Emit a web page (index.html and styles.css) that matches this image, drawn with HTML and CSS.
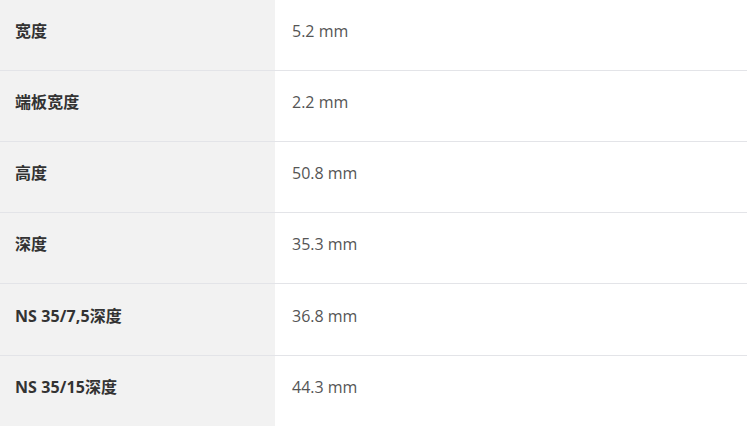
FILE: index.html
```html
<!DOCTYPE html>
<html lang="zh">
<head>
<meta charset="utf-8">
<link rel="stylesheet" href="styles.css">
</head>
<body>
<table class="spec">
  <tbody>
    <tr class="first"><th>宽度</th><td>5.2 mm</td></tr>
    <tr><th>端板宽度</th><td>2.2 mm</td></tr>
    <tr><th>高度</th><td>50.8 mm</td></tr>
    <tr><th>深度</th><td>35.3 mm</td></tr>
    <tr class="tall"><th>NS 35/7,5深度</th><td>36.8 mm</td></tr>
    <tr><th>NS 35/15深度</th><td>44.3 mm</td></tr>
  </tbody>
</table>
</body>
</html>
```
FILE: styles.css
```css
html, body {
  margin: 0;
  padding: 0;
  background: #fff;
}
body {
  font-family: "Open Sans", "Noto Sans CJK SC", sans-serif;
}
.spec {
  width: 747px;
  border-collapse: collapse;
  table-layout: fixed;
}
.spec tr {
  height: 71px;
}
.spec tr.first {
  height: 70px;
}
.spec tr.tall {
  height: 72px;
}
.spec tr + tr th,
.spec tr + tr td {
  border-top: 1px solid #e3e4e8;
}
.spec th,
.spec td {
  padding: 0 15px 7px;
  vertical-align: middle;
  line-height: 22px;
}
.spec th {
  width: 275px;
  box-sizing: border-box;
  background: #f2f2f2;
  text-align: left;
  font-weight: bold;
  font-size: 16px;
  letter-spacing: 0.1px;
  color: #333;
}
.spec td {
  padding-left: 17px;
  font-size: 16px;
  color: #555;
}
```
